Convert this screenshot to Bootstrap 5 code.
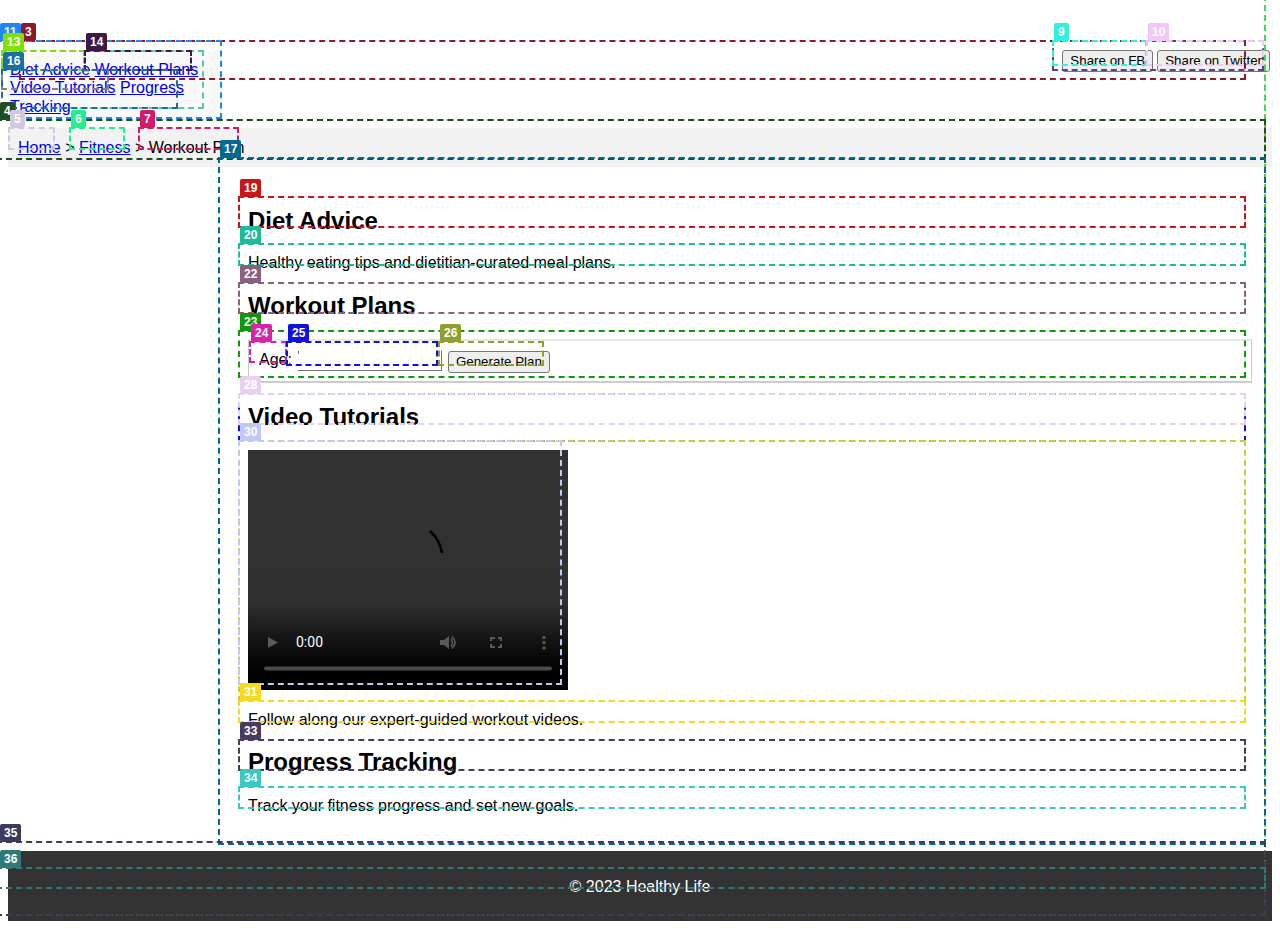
<!DOCTYPE html>
<html lang="en">
<head>
  <meta charset="UTF-8">
  <meta name="viewport" content="width=device-width, initial-scale=1.0">
  <title>Workout Plan - Healthy Life</title>
  <link href="https://cdn.jsdelivr.net/npm/bootstrap@5.3.0/dist/css/bootstrap.min.css" rel="stylesheet">
  <style>
    body {
      margin: 8px;
      font-family: "Liberation Sans", Arial, sans-serif;
      font-size: 16px;
      line-height: 18px;
      color: #000;
      background: #fff;
    }

    a { color: #0000ee; }

    .site-head { padding-top: 42px; height: 120px; }

    .site-nav {
      width: 213px;
      height: 69px;
      padding: 11px 16px 0 2px;
      line-height: 18.4px;
      background: #f9f9f9;
    }

    .plain-btn {
      height: 22px;
      padding: 0 7px;
      font-family: "Liberation Sans", Arial, sans-serif;
      font-size: 13.33px;
      line-height: 18px;
      color: #000;
      background: #efefef;
      border: 1px solid #767676;
      border-radius: 3px;
    }

    .share-row { margin-right: 2px; }

    .crumbs { padding: 11px 10px 10px; background: #f2f2f2; }

    .page-main { margin-left: 220px; padding: 40px 20px 15.6px; }

    .page-main h2 {
      margin: 0 0 19.92px;
      font-size: 24px;
      font-weight: 700;
      line-height: 27px;
    }

    .page-main p { margin: 0 0 19.92px; }

    .page-main .track-note { padding-top: 2px; }

    .plan-form {
      height: 44px;
      margin-bottom: 19.92px;
      padding: 9px 10px;
      border: 1px solid #cbcbcb;
      border-top: 2px solid #e6e6e6;
      border-bottom-width: 2px;
    }

    .age-label { margin-top: 1px; }

    .gen-btn { margin-top: 1px; }

    .age-input {
      width: 145px;
      height: 21px;
      margin-left: 5px;
      margin-right: 6px;
      padding: 0;
      border: 1px solid;
      border-color: #fff #767676 #767676 #fff;
      background: linear-gradient(#767676, #767676) no-repeat 0 0 / 1px 3px;
    }

    .video-box {
      width: 320px;
      height: 240px;
      margin-bottom: 21px;
      background: linear-gradient(#323232 0, #313131 150px, #0d0d0d 200px, #000 225px);
    }

    .video-box svg { display: block; }

    .video-time { font-family: Roboto, sans-serif; font-size: 14px; fill: #fff; }

    .site-foot { padding: 27px 0 25px; color: #fff; background: #333; }
    .site-foot p { margin: 0; }

    .debug-layer { position: absolute; top: 0; left: 0; width: 0; height: 0; pointer-events: none; }

    .debug-box { position: absolute; box-sizing: border-box; border: 2px dashed; }

    .debug-tag {
      position: absolute;
      height: 18px;
      padding: 0 4px;
      font-size: 12px;
      font-weight: 700;
      line-height: 18px;
      color: #fff;
      border-radius: 2px;
    }
  </style>
</head>
<body>
  <!-- Header -->
  <header class="site-head d-flex justify-content-between align-items-start">
    <nav class="site-nav">
      <a href="#">Diet Advice</a> <a href="#">Workout Plans</a>
      <a href="#">Video Tutorials</a> <a href="#">Progress Tracking</a>
    </nav>
    <div class="share-row d-flex gap-1">
      <button class="plain-btn" type="button">Share on FB</button>
      <button class="plain-btn" type="button">Share on Twitter</button>
    </div>
  </header>

  <div class="crumbs"><a href="#">Home</a> &gt; <a href="#">Fitness</a> &gt; Workout Plan</div>

  <main class="page-main">
    <section>
      <h2>Diet Advice</h2>
      <p>Healthy eating tips and dietitian-curated meal plans.</p>
    </section>

    <section>
      <h2>Workout Plans</h2>
      <form class="plan-form d-flex align-items-start" onsubmit="return false">
        <label class="age-label">Age:</label>
        <input class="age-input" type="number">
        <button class="plain-btn gen-btn" type="submit">Generate Plan</button>
      </form>
    </section>

    <section>
      <h2>Video Tutorials</h2>
      <div class="video-box">
        <svg width="320" height="240" viewBox="0 0 320 240" xmlns="http://www.w3.org/2000/svg">
          <path d="M182 81Q192 90 194 103" fill="none" stroke="#000" stroke-width="2.5"/>
          <path d="M20 187L30 192.5L20 198Z" fill="#5a5a5a"/>
          <text class="video-time" x="48" y="197">0:00</text>
          <path d="M192 190H196L201 186V199L196 195H192Z" fill="#5a5a5a"/>
          <path d="M203 188.5Q205.5 192.5 203 196.5M204 186.5Q210 192.5 204 198.5" fill="none" stroke="#5a5a5a" stroke-width="1.6"/>
          <path d="M243 191V188H247M250 188H253V191M253 194V197H250M247 197H243V194" fill="none" stroke="#5a5a5a" stroke-width="2"/>
          <circle cx="296" cy="187.5" r="1.7" fill="#5a5a5a"/>
          <circle cx="296" cy="192.5" r="1.7" fill="#5a5a5a"/>
          <circle cx="296" cy="198" r="1.7" fill="#5a5a5a"/>
          <rect x="16" y="216.5" width="288" height="4" rx="2" fill="#4a4a4a"/>
        </svg>
      </div>
      <p>Follow along our expert-guided workout videos.</p>
    </section>

    <section>
      <h2>Progress Tracking</h2>
      <p class="track-note">Track your fitness progress and set new goals.</p>
    </section>
  </main>

  <footer class="site-foot text-center">
    <p>&copy; 2023 Healthy Life</p>
  </footer>

  <div class="debug-layer" id="debug-layer"></div>

  <script>
    // Outlined regions: id (no tag if null), colour, left, top, right, bottom
    const regions = [
      [null, '#6ec020', -3, -4, 1265, 915],
      [null, '#40d860', -3, -4, 1265, 120],
      [3, '#8b1a2b', 20, 41, 1245, 79],
      [4, '#1f4d1f', -3, 120, 1265, 159],
      [null, '#554488', 1053, 41, 1263, 70],
      [11, '#1e88f0', -3, 41, 221, 118],
      [null, '#4dd0a0', 2, 51, 203, 108],
      [13, '#80e000', 2, 51, 84, 70],
      [14, '#3d1a45', 85, 51, 191, 70],
      [null, '#8a7f8a', 2, 70, 108, 89],
      [16, '#1a6fa0', 2, 70, 177, 108],
      [5, '#d0c8e0', 9, 128, 54, 149],
      [6, '#20f090', 70, 128, 124, 149],
      [7, '#d81868', 139, 128, 238, 149],
      [9, '#30f0e0', 1053, 41, 1146, 65],
      [10, '#f0c8f8', 1147, 41, 1263, 65],
      [17, '#006a8e', 219, 158, 1265, 844],
      [19, '#c8161a', 239, 197, 1245, 227],
      [20, '#1cbc98', 239, 244, 1245, 265],
      [22, '#8a6080', 239, 283, 1245, 313],
      [23, '#0a9a0a', 239, 331, 1245, 377],
      [24, '#dd22aa', 250, 342, 286, 362],
      [25, '#1010e0', 287, 342, 437, 365],
      [26, '#90a030', 439, 342, 543, 365],
      [null, '#1010e0', 239, 394, 1245, 441],
      [28, '#e8d0f0', 239, 394, 1245, 424],
      [null, '#c0d040', 239, 441, 1245, 701],
      [30, '#c0c8f8', 239, 441, 561, 684],
      [31, '#f8d820', 239, 701, 1245, 722],
      [33, '#4a3a60', 239, 740, 1245, 770],
      [34, '#38c8c0', 239, 787, 1245, 808],
      [35, '#3d3a60', -3, 842, 1265, 915],
      [36, '#2f7a78', -3, 868, 1265, 888]
    ];

    const layer = document.getElementById('debug-layer');

    regions.forEach(([id, colour, x0, y0, x1, y1]) => {
      const box = document.createElement('div');
      box.className = 'debug-box';
      box.style.cssText = `left:${x0 - 1}px;top:${y0 - 1}px;width:${x1 - x0 + 2}px;height:${y1 - y0 + 2}px;border-color:${colour}`;
      layer.appendChild(box);
    });

    // Tags go on top of all the outlines
    regions.filter(r => r[0] !== null).forEach(([id, colour, x0, y0]) => {
      const tag = document.createElement('span');
      tag.className = 'debug-tag';
      tag.textContent = id;
      tag.style.cssText = `left:${Math.max(0, x0 + 1)}px;top:${y0 - 18}px;background:${colour}`;
      layer.appendChild(tag);
    });
  </script>
  <script src="https://cdn.jsdelivr.net/npm/bootstrap@5.3.0/dist/js/bootstrap.bundle.min.js"></script>
</body>
</html>
